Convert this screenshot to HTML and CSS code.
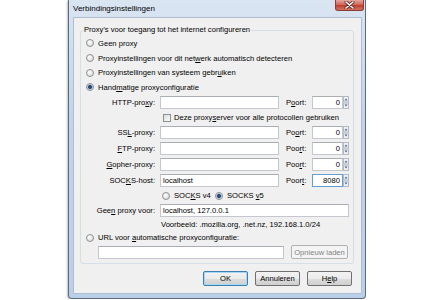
FILE: index.html
```html
<!DOCTYPE html>
<html lang="nl">
<head>
  <meta charset="UTF-8">
  <meta name="viewport" content="width=device-width, initial-scale=1.0">
  <title>Verbindingsinstellingen</title>
  <link rel="stylesheet" href="styles.css">
</head>
<body>

  <div class="window">
    <div class="titlebar">
      <span class="title">Verbindingsinstellingen</span>
      <span class="close">
        <svg width="11" height="8" viewBox="0 0 11 8">
          <path d="M2 1 9 7M9 1 2 7" stroke="#5a2a24" stroke-width="3" stroke-linecap="round"/>
          <path d="M2 1 9 7M9 1 2 7" stroke="#fff" stroke-width="1.6" stroke-linecap="round"/>
        </svg>
      </span>
    </div>

    <div class="client">
      <fieldset class="group">
        <legend>Proxy's voor toegang tot het internet configureren</legend>

        <div class="opt"><span class="radio"></span><span>Geen proxy</span></div>
        <div class="opt"><span class="radio"></span><span>Proxyinstellingen voor dit net<u>w</u>erk automatisch detecteren</span></div>
        <div class="opt"><span class="radio"></span><span>Proxyinstellingen van systeem gebr<u>u</u>iken</span></div>
        <div class="opt"><span class="radio checked"></span><span>Hand<u>m</u>atige proxyconfiguratie</span></div>

        <div class="row">
          <span class="lbl">HTTP-pro<u>x</u>y:</span>
          <span class="field host"></span>
          <span class="port-lbl">P<u>o</u>ort:</span>
          <span class="port"><span class="field num">0</span><svg class="spin" width="6" height="13" viewBox="0 0 6 13"><rect x="0.5" y="0.5" width="5" height="5.5" fill="#edf1f6" stroke="#b4bac4"/><rect x="0.5" y="7" width="5" height="5.5" fill="#edf1f6" stroke="#b4bac4"/><path d="M1.5 4.5 3 2.5 4.5 4.5z" fill="#4d6079"/><path d="M1.5 8.5 3 10.5 4.5 8.5z" fill="#4d6079"/></svg></span>
        </div>

        <div class="check-row"><span class="check"></span><span>Deze proxy<u>s</u>erver voor alle protocollen gebruiken</span></div>

        <div class="row">
          <span class="lbl">SS<u>L</u>-proxy:</span>
          <span class="field host"></span>
          <span class="port-lbl">Po<u>o</u>rt:</span>
          <span class="port"><span class="field num">0</span><svg class="spin" width="6" height="13" viewBox="0 0 6 13"><rect x="0.5" y="0.5" width="5" height="5.5" fill="#edf1f6" stroke="#b4bac4"/><rect x="0.5" y="7" width="5" height="5.5" fill="#edf1f6" stroke="#b4bac4"/><path d="M1.5 4.5 3 2.5 4.5 4.5z" fill="#4d6079"/><path d="M1.5 8.5 3 10.5 4.5 8.5z" fill="#4d6079"/></svg></span>
        </div>

        <div class="row">
          <span class="lbl"><u>F</u>TP-proxy:</span>
          <span class="field host"></span>
          <span class="port-lbl">Poo<u>r</u>t:</span>
          <span class="port"><span class="field num">0</span><svg class="spin" width="6" height="13" viewBox="0 0 6 13"><rect x="0.5" y="0.5" width="5" height="5.5" fill="#edf1f6" stroke="#b4bac4"/><rect x="0.5" y="7" width="5" height="5.5" fill="#edf1f6" stroke="#b4bac4"/><path d="M1.5 4.5 3 2.5 4.5 4.5z" fill="#4d6079"/><path d="M1.5 8.5 3 10.5 4.5 8.5z" fill="#4d6079"/></svg></span>
        </div>

        <div class="row">
          <span class="lbl"><u>G</u>opher-proxy:</span>
          <span class="field host"></span>
          <span class="port-lbl">Poo<u>r</u>t:</span>
          <span class="port"><span class="field num">0</span><svg class="spin" width="6" height="13" viewBox="0 0 6 13"><rect x="0.5" y="0.5" width="5" height="5.5" fill="#edf1f6" stroke="#b4bac4"/><rect x="0.5" y="7" width="5" height="5.5" fill="#edf1f6" stroke="#b4bac4"/><path d="M1.5 4.5 3 2.5 4.5 4.5z" fill="#4d6079"/><path d="M1.5 8.5 3 10.5 4.5 8.5z" fill="#4d6079"/></svg></span>
        </div>

        <div class="row">
          <span class="lbl">SOC<u>K</u>S-host:</span>
          <span class="field host">localhost</span>
          <span class="port-lbl">Poor<u>t</u>:</span>
          <span class="port"><span class="field num focus">8080</span><svg class="spin" width="6" height="13" viewBox="0 0 6 13"><rect x="0.5" y="0.5" width="5" height="5.5" fill="#edf1f6" stroke="#b4bac4"/><rect x="0.5" y="7" width="5" height="5.5" fill="#edf1f6" stroke="#b4bac4"/><path d="M1.5 4.5 3 2.5 4.5 4.5z" fill="#4d6079"/><path d="M1.5 8.5 3 10.5 4.5 8.5z" fill="#4d6079"/></svg></span>
        </div>

        <div class="socks-row">
          <span class="radio"></span><span class="v4-text">SOC<u>K</u>S v4</span>
          <span class="radio checked"></span><span>SOCKS <u>v</u>5</span>
        </div>

        <div class="row">
          <span class="lbl">Gee<u>n</u> proxy voor:</span>
          <span class="field wide">localhost, 127.0.0.1</span>
        </div>

        <div class="hint">Voorbeeld: .mozilla.org, .net.nz, 192.168.1.0/24</div>

        <div class="opt url-opt"><span class="radio"></span><span>URL voor <u>a</u>utomatische proxyconfiguratie:</span></div>

        <div class="url-row">
          <span class="field url"></span>
          <span class="btn disabled">Opnieuw laden</span>
        </div>
      </fieldset>

      <div class="buttons">
        <span class="btn default">OK</span>
        <span class="btn">Annuleren</span>
        <span class="btn">H<u>e</u>lp</span>
      </div>
    </div>
  </div>

</body>
</html>
```

FILE: styles.css
```css
body {
  margin: 0;
  background: #fff;
  font-family: "Liberation Sans", Arial, sans-serif;
  font-size: 7.6px;
  color: #000;
}

u {
  text-decoration-thickness: 1px;
  text-underline-offset: 1px;
}

/* window frame */
.window {
  width: 298px;
  height: 299px;
  margin-left: 68px;
  box-sizing: border-box;
  border: 1px solid #5d6b7d;
  border-top: none;
  border-radius: 0 0 4px 4px;
  background: linear-gradient(#dae5f2, #c2d4ea 40%, #bccfe8);
  box-shadow: -1px 1px 2px rgba(0,0,0,0.25);
}

.titlebar {
  display: flex;
  align-items: flex-start;
  height: 17px;
}

.title {
  padding: 4px 0 0 4px;
  line-height: 10px;
  font-size: 8px;
}

.close {
  margin-left: auto;
  margin-right: 1px;
  width: 29px;
  height: 11px;
  box-sizing: border-box;
  display: flex;
  align-items: center;
  justify-content: center;
  border: 1px solid #8a3b33;
  border-top: none;
  border-radius: 0 0 3px 3px;
  background: linear-gradient(#e7a89e, #d0685b 45%, #c2402f 55%, #d3735f);
}

.client {
  height: 277px;
  margin: 0 3px 0 4px;
  box-sizing: border-box;
  border: 1px solid #aebfd3;
  background: #f0f0f0;
  padding-top: 6px;
}

/* group box */
.group {
  width: 274px;
  box-sizing: border-box;
  margin: 0 0 0 6px;
  padding: 0 0 3px 5px;
  border: 1px solid #d5dfe5;
  border-radius: 3px;
}

.group legend {
  padding: 0 1px;
  margin-left: -3px;
  line-height: 12px;
}

.opt {
  display: flex;
  align-items: center;
  height: 14.7px;
  white-space: nowrap;
}

.radio {
  width: 8px;
  height: 8px;
  box-sizing: border-box;
  border: 1px solid #8e8f8f;
  border-radius: 50%;
  background: radial-gradient(circle at 40% 35%, #fff, #e4e4e4 60%, #cfcfcf);
  margin-right: 4px;
  flex-shrink: 0;
}

.radio.checked {
  background: radial-gradient(circle, #2b4e79 0 1.6px, #8fb0d4 2.2px, #e9eef4 3px);
}

.check {
  width: 8px;
  height: 8px;
  box-sizing: border-box;
  border: 1px solid #8e8f8f;
  background: linear-gradient(135deg, #dcdcdc, #fbfbfb);
  margin-right: 3px;
  flex-shrink: 0;
}

/* manual proxy rows */
.row {
  display: flex;
  align-items: center;
  height: 16px;
  white-space: nowrap;
}

.lbl {
  width: 69px;
  text-align: right;
  margin-right: 5px;
}

.field {
  height: 13px;
  box-sizing: border-box;
  background: #fff;
  border: 1px solid #c4c8ce;
  border-top-color: #a9adb4;
  padding: 0 2px;
  line-height: 11px;
  white-space: nowrap;
}

.host {
  width: 119px;
}

.wide {
  width: 189px;
}

.port-lbl {
  width: 26px;
  margin-left: 7px;
}

.port {
  display: flex;
  width: 37px;
}

.num {
  width: 31px;
  text-align: right;
}

.num.focus {
  border-color: #5f9ed6;
}

.check-row {
  display: flex;
  align-items: center;
  height: 14px;
  padding-left: 77px;
  white-space: nowrap;
}

.socks-row {
  display: flex;
  align-items: center;
  height: 14px;
  padding-left: 76px;
  white-space: nowrap;
}

.v4-text {
  width: 41px;
}

.hint {
  height: 12px;
  line-height: 12px;
  padding-left: 75px;
  white-space: nowrap;
}

.url-opt {
  height: 14px;
}

.url-row {
  display: flex;
  align-items: center;
  height: 15px;
  padding-left: 12px;
}

.url {
  width: 186px;
}

/* push buttons */
.btn {
  width: 45px;
  height: 15px;
  box-sizing: border-box;
  display: flex;
  align-items: center;
  justify-content: center;
  border: 1px solid #707070;
  border-radius: 2px;
  background: linear-gradient(#f2f2f2, #ebebeb 50%, #dddddd 51%, #cfcfcf);
  white-space: nowrap;
}

.btn.default {
  border-color: #3c7fb1;
  box-shadow: inset 0 0 0 1px #a6d8f5;
}

.btn.disabled {
  width: 57px;
  height: 14px;
  margin-left: 7px;
  border-color: #adb2b5;
  background: #f4f4f4;
  color: #838383;
}

.buttons {
  display: flex;
  justify-content: flex-end;
  gap: 7px;
  margin-top: 7px;
  padding-right: 9px;
}
```
